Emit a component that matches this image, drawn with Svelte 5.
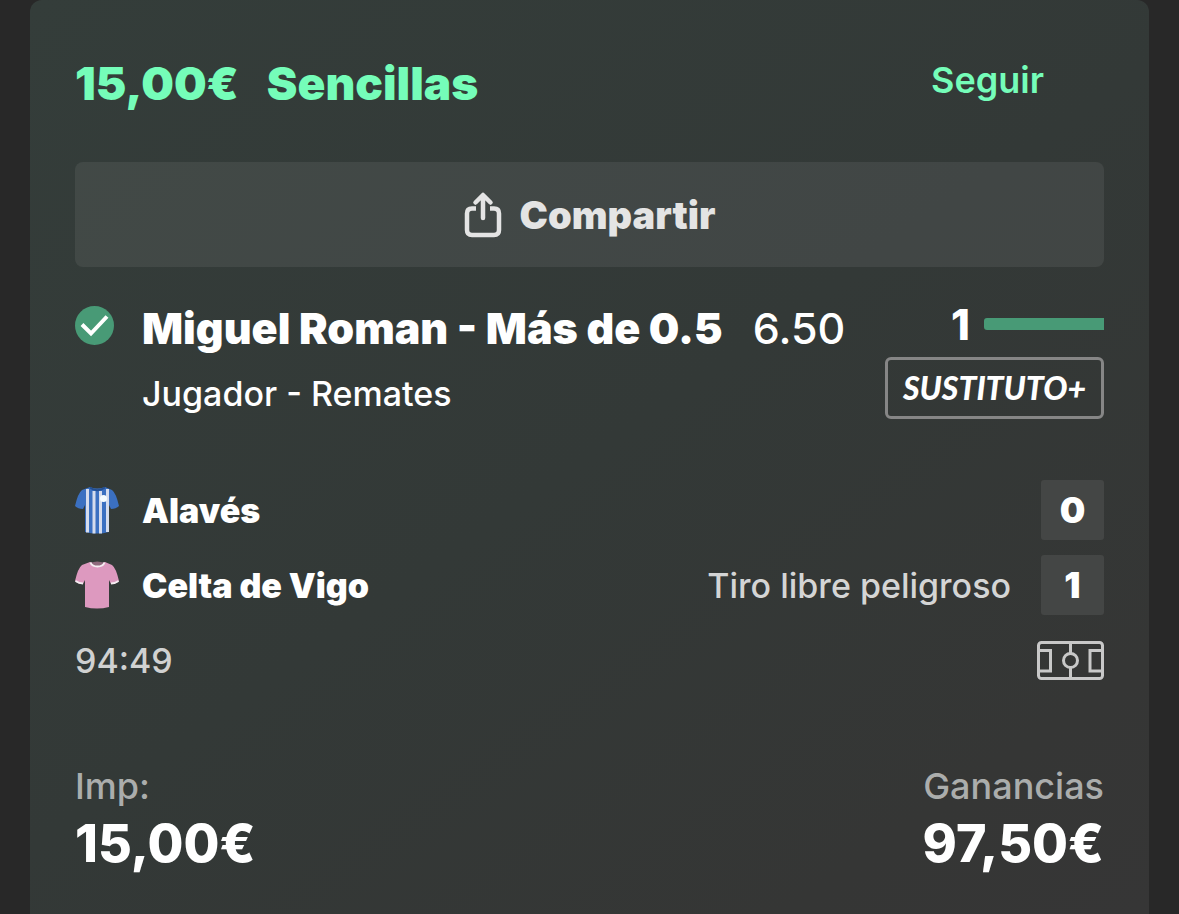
<script lang="ts">
  type Team = {
    name: string;
    kit: 'stripes' | 'plain';
    score: number;
    event?: string;
  };

  const stake = '15,00€';
  const returns = '97,50€';

  const teams: Team[] = [
    { name: 'Alavés', kit: 'stripes', score: 0 },
    { name: 'Celta de Vigo', kit: 'plain', score: 1, event: 'Tiro libre peligroso' },
  ];

  // Share of the player line already reached.
  const count = 1;
  const line = 0.5;
  const progress = Math.min(count / line, 1) * 100;
</script>

<main class="bet">
  <header class="head">
    <h1 class="title"><span>{stake}</span><span>Sencillas</span></h1>
    <button type="button" class="follow">Seguir</button>
  </header>

  <button type="button" class="share">
    <svg class="share-icon" viewBox="0 0 38 48" aria-hidden="true">
      <path d="M12 17.500H8Q3 17.500 3 22.500V39Q3 44 8 44H30Q35 44 35 39V22.500Q35 17.500 30 17.500H26" />
      <path class="arrow" d="M19 27V5M11.500 11.500L19 4L26.500 11.500" />
    </svg>
    Compartir
  </button>

  <section class="selection">
    <svg class="check" viewBox="0 0 39 39" aria-hidden="true">
      <circle cx="19.500" cy="19.500" r="19.500" />
      <path d="M7 18.500L16 27.500L32 10.500" />
    </svg>
    <div class="pick">
      <div class="pick-line">
        <h2 class="name">Miguel Roman - Más de 0.5</h2>
        <span class="odds">6.50</span>
      </div>
      <p class="market">Jugador - Remates</p>
    </div>
    <div class="status">
      <div class="count">
        <span>{count}</span>
        <div class="track"><div class="fill" style:width="{progress}%"></div></div>
      </div>
      <span class="badge">SUSTITUTO+</span>
    </div>
  </section>

  <section class="match">
    {#each teams as team}
      <div class="team">
        <svg class="kit" viewBox="0 0 46 50" aria-hidden="true">
          {#if team.kit === 'stripes'}
            <path class="blue" d="M15 2Q22 5 30 2L37 5Q41 8 44 21Q41 24 36 24L34 20V47Q22 50 10 47V20L8 24Q3 24 0 21Q3 8 7 5Z" />
            <path class="white" d="M11 4H14V47.500H11ZM17.500 6H20.500V48.500H17.500ZM24 6H27V48.500H24ZM31 4H34V47H31Z" />
            <path class="collar dark" d="M15 2.500Q22 8 30 2.500" />
            <circle cx="28.500" cy="13.500" r="3.500" />
          {:else}
            <path class="pink" d="M15 2Q22 5 30 2L37 5Q41 8 44 21Q41 24 36 24L34 20V47Q22 50 10 47V20L8 24Q3 24 0 21Q3 8 7 5Z" />
            <path class="inside" d="M15.500 3Q22 0 29.500 3Q28 6.500 22 6.500Q17 6.500 15.500 3Z" />
            <path class="collar" d="M15.500 2.500Q17 6.500 22.500 6.500Q28 6.500 29.500 2.500" />
            <path class="cuff" d="M0.500 21Q4 23.500 8 23.500M43.500 21Q40 23.500 36 23.500" />
          {/if}
        </svg>
        <h3 class="team-name">{team.name}</h3>
        {#if team.event}
          <span class="event">{team.event}</span>
        {/if}
        <span class="score">{team.score}</span>
      </div>
    {/each}
    <div class="clock">
      <time>94:49</time>
      <svg class="pitch" viewBox="0 0 67 39" aria-label="Campo">
        <rect x="1.500" y="1.500" width="64" height="36" rx="3" />
        <path d="M33.500 2V12M33.500 27V37M2 9.500H13.500V30H2M65 9.500H53V30H65" />
        <circle cx="33.500" cy="19.500" r="7" />
      </svg>
    </div>
  </section>

  <dl class="totals">
    <div>
      <dt>Imp:</dt>
      <dd>{stake}</dd>
    </div>
    <div class="right">
      <dt>Ganancias</dt>
      <dd>{returns}</dd>
    </div>
  </dl>
</main>

<style>
  :global(body) {
    margin: 0;
    background: #282828;
  }

  .bet {
    box-sizing: border-box;
    min-height: 100vh;
    margin: 0 30px;
    padding: 52px 45px 32px;
    border-radius: 12px 12px 0 0;
    background: linear-gradient(145deg, #343d3a 0%, #333937 50%, #353635 85%, #363636 100%);
    color: #fff;
    font-family: Inter, 'Liberation Sans', sans-serif;
  }

  h1,
  h2,
  h3,
  p,
  dl,
  dd {
    margin: 0;
  }

  button {
    border: 0;
    background: none;
    font-family: inherit;
    cursor: pointer;
  }

  .head {
    display: flex;
    align-items: flex-start;
    justify-content: space-between;
    height: 110px;
  }

  .title {
    display: flex;
    gap: 28px;
    font-size: 46px;
    font-weight: 900;
    line-height: 62px;
    color: #75fdb9;
  }

  .follow {
    padding: 0 60px;
    font-size: 36px;
    font-weight: 600;
    line-height: 56px;
    color: #75fdb9;
  }

  .share {
    display: flex;
    align-items: center;
    justify-content: center;
    gap: 18px;
    width: 100%;
    height: 105px;
    border-radius: 8px;
    background: rgba(255, 255, 255, 0.07);
    font-size: 38px;
    font-weight: 900;
    color: #e4e4e4;
  }

  .share-icon {
    width: 38px;
    height: 48px;
    fill: none;
    stroke: #e4e4e4;
    stroke-width: 4.500;
    stroke-linejoin: round;
  }

  .arrow {
    stroke-linecap: round;
  }

  .selection {
    display: flex;
    padding-top: 30px;
  }

  .check {
    flex: none;
    width: 39px;
    height: 39px;
    margin: 9px 28px 0 0;
    fill: #489a76;
  }

  .check path {
    fill: none;
    stroke: #fff;
    stroke-width: 4;
  }

  .pick {
    flex: 1;
  }

  .pick-line {
    display: flex;
    gap: 30px;
    font-size: 43px;
    line-height: 62px;
    white-space: nowrap;
  }

  .name {
    font-size: inherit;
    font-weight: 900;
  }

  .odds {
    font-weight: 500;
  }

  .market {
    font-size: 34px;
    font-weight: 500;
    line-height: 70px;
  }

  .status {
    display: flex;
    flex-direction: column;
    gap: 6px;
    align-items: flex-end;
  }

  .count {
    display: flex;
    align-items: center;
    gap: 14px;
    height: 54px;
    font-size: 43px;
    font-weight: 800;
  }

  .track {
    width: 120px;
    height: 12px;
  }

  .fill {
    height: 100%;
    border-radius: 3px 0 0 3px;
    background: #489a76;
  }

  .badge {
    box-sizing: border-box;
    height: 62px;
    padding: 0 15px;
    border: 3px solid #868686;
    border-radius: 6px;
    font-family: Lato, sans-serif;
    font-size: 32px;
    font-style: italic;
    font-weight: 900;
    line-height: 56px;
  }

  .match {
    display: flex;
    flex-direction: column;
    gap: 15px;
    padding-top: 51px;
  }

  .team,
  .clock {
    display: flex;
    align-items: center;
    height: 60px;
  }

  .kit {
    width: 46px;
    height: 50px;
    margin-right: 21px;
  }

  .blue {
    fill: #3b70c1;
  }

  .white {
    fill: #d5dced;
  }

  .kit circle {
    fill: #f4fbff;
  }

  .pink {
    fill: #dd99bf;
  }

  .inside {
    fill: #8f6a7d;
  }

  .collar,
  .cuff {
    fill: none;
    stroke: #f5edf2;
    stroke-width: 2;
  }

  .dark {
    stroke: #254f91;
  }

  .team-name {
    flex: 1;
    font-size: 34px;
    font-weight: 900;
  }

  .event {
    margin-right: 30px;
    font-size: 34px;
    font-weight: 500;
    color: #d4d5d5;
  }

  .score {
    width: 63px;
    border-radius: 3px;
    background: #444645;
    font-size: 36px;
    font-weight: 900;
    line-height: 60px;
    text-align: center;
  }

  .clock {
    justify-content: space-between;
    font-size: 34px;
    font-weight: 500;
    color: #d0d1d1;
  }

  .pitch {
    width: 67px;
    height: 39px;
    fill: none;
    stroke: #c8c8c8;
    stroke-width: 3;
  }

  .totals {
    display: flex;
    justify-content: space-between;
    padding-top: 72px;
  }

  .right {
    text-align: right;
  }

  dt {
    font-size: 36px;
    font-weight: 500;
    line-height: 48px;
    color: #abadac;
  }

  dd {
    font-size: 52px;
    font-weight: 800;
    line-height: 68px;
  }
</style>
